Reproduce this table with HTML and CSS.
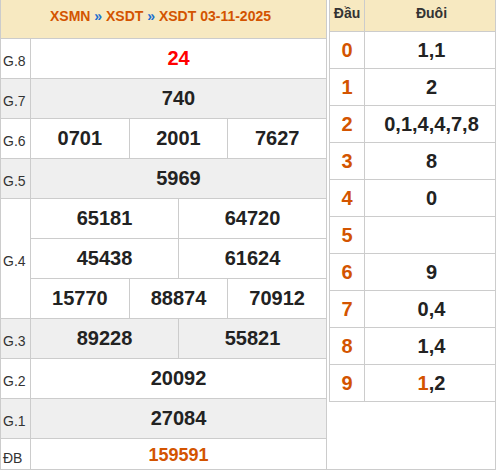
FILE: index.html
```html
<!DOCTYPE html>
<html lang="vi">
<head>
<meta charset="utf-8">
<title>XSDT 03-11-2025</title>
<link rel="stylesheet" href="styles.css">
</head>
<body>
<div class="wrap">
  <div class="res">
    <div class="res-head"><span>XSMN</span> <span class="sep">»</span> <span>XSDT</span> <span class="sep">»</span> <span>XSDT 03-11-2025</span></div>

    <div class="lbl">G.8</div>
    <div class="val"><span class="n red">24</span></div>

    <div class="lbl alt">G.7</div>
    <div class="val alt"><span class="n">740</span></div>

    <div class="lbl">G.6</div>
    <div class="val split"><div class="c"><span class="n">0701</span></div><div class="c"><span class="n">2001</span></div><div class="c"><span class="n">7627</span></div></div>

    <div class="lbl alt">G.5</div>
    <div class="val alt"><span class="n">5969</span></div>

    <div class="lbl g4">G.4</div>
    <div class="val split"><div class="c"><span class="n">65181</span></div><div class="c"><span class="n">64720</span></div></div>
    <div class="val split"><div class="c"><span class="n">45438</span></div><div class="c"><span class="n">61624</span></div></div>
    <div class="val split"><div class="c"><span class="n">15770</span></div><div class="c"><span class="n">88874</span></div><div class="c"><span class="n">70912</span></div></div>

    <div class="lbl alt">G.3</div>
    <div class="val split"><div class="c alt"><span class="n">89228</span></div><div class="c alt"><span class="n">55821</span></div></div>

    <div class="lbl">G.2</div>
    <div class="val"><span class="n">20092</span></div>

    <div class="lbl alt">G.1</div>
    <div class="val alt"><span class="n">27084</span></div>

    <div class="lbl">ĐB</div>
    <div class="val"><span class="n db">159591</span></div>
  </div>

  <div class="side">
    <div class="loto">
      <div class="lh">Đầu</div><div class="lh tail">Đuôi</div>
      <div class="d">0</div><div class="t">1,1</div>
      <div class="d">1</div><div class="t">2</div>
      <div class="d">2</div><div class="t">0,1,4,4,7,8</div>
      <div class="d">3</div><div class="t">8</div>
      <div class="d">4</div><div class="t">0</div>
      <div class="d">5</div><div class="t"></div>
      <div class="d">6</div><div class="t">9</div>
      <div class="d">7</div><div class="t">0,4</div>
      <div class="d">8</div><div class="t">1,4</div>
      <div class="d">9</div><div class="t"><span class="hot">1</span>,2</div>
    </div>
  </div>
</div>
</body>
</html>
```
FILE: styles.css
```css
html, body {
  margin: 0;
  padding: 0;
  background: #fff;
}

body {
  font-family: "Liberation Sans", Arial, sans-serif;
  color: #222;
}

.wrap {
  display: flex;
  width: 496px;
  height: 470px;
  box-sizing: border-box;
  border-bottom: 1px solid #ccc;
  overflow: hidden;
}

/* results table */
.res {
  flex: 0 0 auto;
  display: grid;
  grid-template-columns: 29px 295px;
  grid-template-rows: 38px repeat(10, 39px) 33px;
  gap: 1px;
  padding: 0 1px;
  background: #ccc;
}

.res-head {
  grid-column: 1 / span 2;
  background: #f7e9c1;
  color: #d35400;
  font-size: 14px;
  font-weight: bold;
  text-align: center;
  padding-top: 8px;
  box-sizing: border-box;
  padding-right: 6px;
}

.res-head .sep {
  color: #1a6fcf;
}

.lbl {
  grid-column: 1;
  background: #fff;
  font-size: 14px;
  color: #333;
  display: flex;
  align-items: center;
  padding: 5px 0 0 2px;
  box-sizing: border-box;
}

.lbl.g4 {
  grid-row: span 3;
}

.val {
  grid-column: 2;
  background: #fff;
  display: flex;
  align-items: center;
  justify-content: center;
}

.alt {
  background: #efefef;
}

.val.split {
  gap: 1px;
  background: #ccc;
  align-items: stretch;
}

.val.split .c {
  flex: 1 1 0;
  background: #fff;
  display: flex;
  align-items: center;
  justify-content: center;
}

.val.split .c.alt {
  background: #efefef;
}

.n {
  font-size: 20px;
  font-weight: bold;
  color: #222;
}

.n.red {
  color: #f00;
}

.n.db {
  font-size: 18px;
  color: #d35400;
}

/* loto table */
.side {
  flex: 0 0 169px;
  box-sizing: border-box;
  padding-left: 2px;
  border-right: 1px solid #ccc;
}

.loto {
  display: grid;
  grid-template-columns: 34px 130px;
  grid-template-rows: 31px;
  grid-auto-rows: 36px;
  gap: 1px;
  padding: 0 0 1px 1px;
  background: #ccc;
}

.lh {
  background: #f7e9c1;
  font-size: 14px;
  font-weight: bold;
  color: #333;
  text-align: center;
  padding-top: 5px;
  box-sizing: border-box;
}

.lh.tail {
  padding-left: 3px;
}

.d, .t {
  background: #fff;
  font-size: 20px;
  font-weight: bold;
  display: flex;
  align-items: center;
  justify-content: center;
}

.d {
  color: #d35400;
}

.t {
  color: #222;
  padding-left: 3px;
}

.t .hot {
  color: #d35400;
}
```
